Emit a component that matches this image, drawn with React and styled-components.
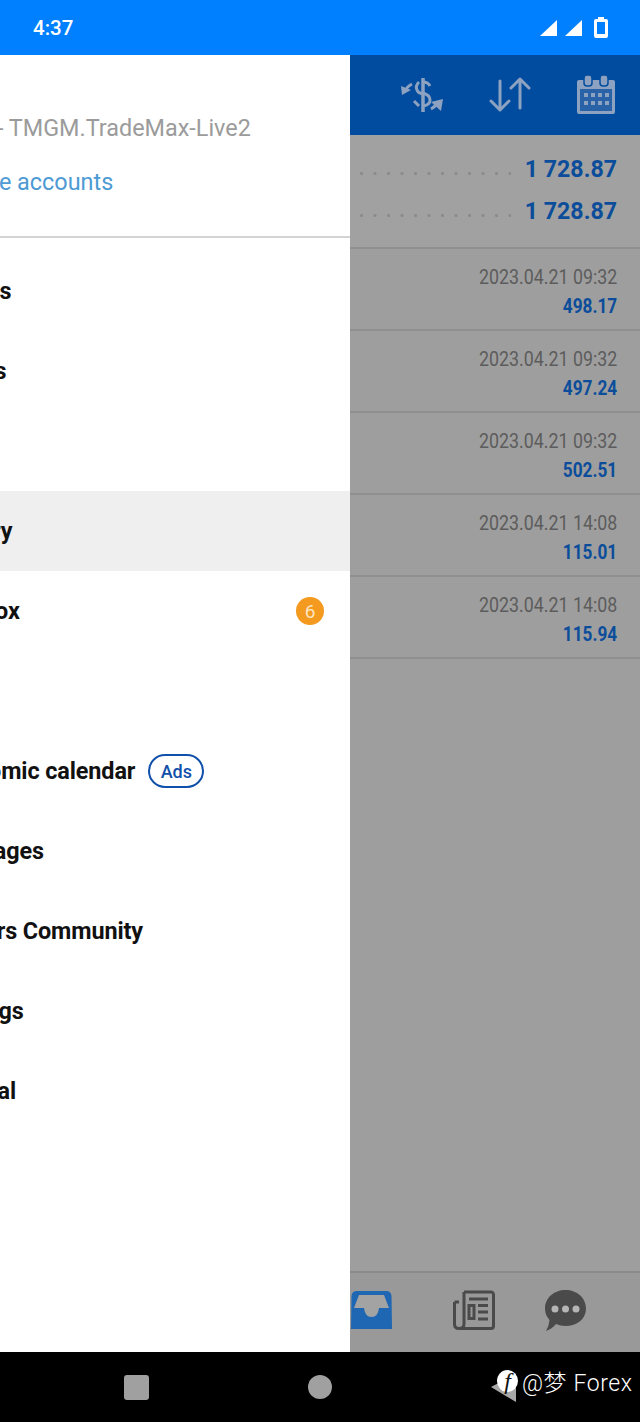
import styled, { createGlobalStyle } from 'styled-components'

const GlobalStyle = createGlobalStyle`
    html, body {
        margin: 0;
        padding: 0;
        background: #000;
    }
    body {
        font-family: Roboto, "Noto Sans CJK SC", sans-serif;
    }
`

const menuItems = [
    { label: 'Quotes' },
    { label: 'Charts' },
    { label: 'Trade' },
    { label: 'History', active: true },
    { label: 'Mailbox', count: 6 },
    { label: 'News' },
    { label: 'Economic calendar', ads: true },
    { label: 'Messages' },
    { label: 'Traders Community' },
    { label: 'Settings' },
    { label: 'Journal' },
]

const deals = [
    { time: '2023.04.21 09:32', value: '498.17' },
    { time: '2023.04.21 09:32', value: '497.24' },
    { time: '2023.04.21 09:32', value: '502.51' },
    { time: '2023.04.21 14:08', value: '115.01' },
    { time: '2023.04.21 14:08', value: '115.94' },
]

const Screen = styled.div`
    position: relative;
    width: 640px;
    height: 1422px;
    display: flex;
    flex-direction: column;
    overflow: hidden;
`

const StatusBar = styled.div`
    height: 55px;
    flex: none;
    background: #0080ff;
    display: flex;
    align-items: center;
    justify-content: space-between;
    padding: 0 32px 0 33px;
    box-sizing: border-box;
    color: #fff;
`

const Clock = styled.span`
    font-size: 20.5px;
    font-weight: 500;
`

const StatusIcons = styled.div`
    display: flex;
    align-items: center;
    gap: 8px;
`

const BatterySlot = styled.div`
    display: flex;
    margin-left: 4px;
`

const Body = styled.div`
    flex: 1;
    min-height: 0;
    display: flex;
`

const Drawer = styled.aside`
    width: 350px;
    flex: none;
    background: #fff;
    display: flex;
    flex-direction: column;
    overflow: hidden;
`

const DrawerHeader = styled.div`
    height: 183px;
    flex: none;
    box-sizing: border-box;
    border-bottom: 2px solid #d4d4d4;
    padding-top: 58px;
    display: flex;
    flex-direction: column;
    gap: 24px;
`

const ServerLine = styled.div`
    font-size: 23.4px;
    line-height: 30px;
    color: #9b9b9b;
    margin-left: -3px;
    white-space: nowrap;
`

const ManageLink = styled.div`
    font-size: 23.4px;
    line-height: 30px;
    color: #4d9ad4;
    margin-left: -73px;
    white-space: nowrap;
`

const Menu = styled.nav`
    padding-top: 13px;
    display: flex;
    flex-direction: column;
`

const MenuRow = styled.div`
    height: 80px;
    display: flex;
    align-items: center;
    padding-right: 26px;
    background: ${p => (p.$active ? '#efefef' : 'transparent')};
`

const MenuLabel = styled.span`
    margin-left: -63px;
    font-size: 23.4px;
    font-weight: 700;
    letter-spacing: -0.1px;
    color: #111;
    white-space: nowrap;
`

const CountBadge = styled.span`
    margin-left: auto;
    width: 28px;
    height: 28px;
    border-radius: 50%;
    background: #f39a1f;
    color: #fde6c0;
    font-size: 19px;
    display: flex;
    align-items: center;
    justify-content: center;
`

const AdsPill = styled.span`
    margin-left: 13px;
    width: 56px;
    height: 34px;
    box-sizing: border-box;
    border: 2px solid #1150aa;
    border-radius: 17px;
    color: #1150aa;
    font-size: 18px;
    font-weight: 500;
    display: flex;
    align-items: center;
    justify-content: center;
`

const Pane = styled.main`
    flex: 1;
    min-width: 0;
    background: #9e9e9e;
    display: flex;
    flex-direction: column;
`

const Toolbar = styled.div`
    height: 80px;
    flex: none;
    background: #024c9f;
    display: flex;
    align-items: center;
    justify-content: flex-end;
    gap: 45px;
    padding-right: 24px;
`

const Summary = styled.div`
    height: 114px;
    flex: none;
    box-sizing: border-box;
    padding: 13px 23px 0 10px;
    background: #a1a1a1;
    border-bottom: 2px solid #8f8f8f;
`

const SummaryRow = styled.div`
    height: 42px;
    display: flex;
    align-items: center;
    gap: 14px;
`

const Leader = styled.div`
    flex: 1;
    height: 3px;
    margin-top: 8px;
    background-image: radial-gradient(circle at 1.5px 1.5px, #8a8a8a 1.3px, transparent 1.6px);
    background-size: 13.5px 3px;
    background-repeat: repeat-x;
`

const SummaryValue = styled.span`
    font-size: 23.2px;
    font-weight: 700;
    color: #0b4d9b;
    white-space: nowrap;
`

const DealRow = styled.div`
    height: 82px;
    flex: none;
    box-sizing: border-box;
    border-bottom: 2px solid #8f8f8f;
    padding: 15px 23px 0 0;
    display: flex;
    flex-direction: column;
    align-items: flex-end;
    gap: 3px;
`

const DealTime = styled.span`
    font-size: 20px;
    line-height: 26px;
    color: #5c5c5c;
    white-space: nowrap;
    transform: scaleX(0.89);
    transform-origin: right center;
`

const DealValue = styled.span`
    font-size: 20px;
    line-height: 26px;
    font-weight: 700;
    color: #0b4d9b;
    white-space: nowrap;
    transform: scaleX(0.86);
    transform-origin: right center;
`

const Spacer = styled.div`
    flex: 1;
`

const TabBar = styled.div`
    height: 81px;
    flex: none;
    box-sizing: border-box;
    border-top: 2px solid #8a8a8a;
    background: #999;
    display: flex;
    align-items: center;
    padding: 0 0 5px 1px;
`

const TabSlot = styled.div`
    display: flex;
    margin-left: ${p => p.$gap}px;
`

const NavBar = styled.div`
    height: 70px;
    flex: none;
    background: #000;
    display: grid;
    grid-template-columns: repeat(3, 184px);
    justify-content: center;
    justify-items: center;
    align-items: center;
`

const NavSquare = styled.div`
    width: 25px;
    height: 25px;
    border-radius: 3px;
    background: #a0a0a0;
`

const NavCircle = styled.div`
    width: 24px;
    height: 24px;
    border-radius: 50%;
    background: #a0a0a0;
`

const BackSlot = styled.div`
    display: flex;
    margin-top: 1px;
`

const Watermark = styled.div`
    position: absolute;
    left: 497px;
    top: 1364px;
    display: flex;
    align-items: center;
    gap: 4px;
    color: #fff;
`

const FacebookBadge = styled.span`
    width: 21px;
    height: 22px;
    border-radius: 50%;
    background: #fff;
    color: #111;
    font-family: "Liberation Serif", serif;
    font-style: italic;
    font-size: 24px;
    line-height: 22px;
    display: flex;
    align-items: center;
    justify-content: center;
`

const WatermarkText = styled.span`
    font-family: Roboto, "Noto Sans CJK SC", sans-serif;
    font-size: 23px;
    font-weight: 300;
    letter-spacing: 0.6px;
    white-space: nowrap;
`

const SignalIcon = () => (
    <svg width="17" height="16" viewBox="0 0 17 16">
        <path d="M17 0V16H0Z" fill="#fff" />
    </svg>
)

const BatteryIcon = () => (
    <svg width="14" height="21" viewBox="0 0 14 21">
        <path d="M4 0h6v2h2a2 2 0 0 1 2 2v15a2 2 0 0 1-2 2H2a2 2 0 0 1-2-2V4a2 2 0 0 1 2-2h2Z" fill="#fff" />
        <rect x="3" y="5" width="8" height="12" fill="#0080ff" />
    </svg>
)

const ExchangeIcon = () => (
    <svg width="46" height="36" viewBox="0 0 46 36" fill="none" stroke="#8da2c0" strokeWidth="3">
        <path d="M25 1V35" strokeWidth="3.500" />
        <path d="M32 9Q30 5 25 5" />
        <path d="M25 16Q32 18 32 23Q32 28 25 29" />
        <path d="M21 5Q17 9 19 13Q20 16 25 17" />
        <path d="M16 24L21 29" />
        <path d="M14 7Q10 9 8 12" />
        <path d="M3 9L13 13L4 18Z" fill="#8da2c0" stroke="none" />
        <path d="M33 32Q37 30 39 26" />
        <path d="M33 25L45 22L43 34Z" fill="#8da2c0" stroke="none" />
    </svg>
)

const SortIcon = () => (
    <svg width="42" height="36" viewBox="0 0 42 36" fill="none" stroke="#8da2c0" strokeWidth="3" strokeLinecap="round" strokeLinejoin="round">
        <path d="M11 4V33M2 24L11 33L20 24" />
        <path d="M31 2V31M22 11L31 2L40 11" />
    </svg>
)

const CalendarIcon = () => (
    <svg width="40" height="40" viewBox="0 0 40 40">
        <path d="M3 5H37A2 2 0 0 1 39 7V37A2 2 0 0 1 37 39H3A2 2 0 0 1 1 37V7A2 2 0 0 1 3 5Z" fill="#8da2c0" />
        <rect x="4" y="14" width="32" height="22" fill="#2a62a8" />
        <rect x="8" y="0" width="8" height="11" rx="3" fill="#8da2c0" stroke="#024c9f" strokeWidth="1.5" />
        <rect x="24" y="0" width="8" height="11" rx="3" fill="#8da2c0" stroke="#024c9f" strokeWidth="1.5" />
        {[0, 1, 2, 3].map(i => [0, 1].map(j => (
            <rect key={`${i}${j}`} x={8 + i * 7} y={18 + j * 8} width="4" height="4" fill="#8da2c0" />
        )))}
    </svg>
)

const TrayIcon = () => (
    <svg width="41" height="38" viewBox="0 0 41 38">
        <path d="M6 0H35Q40 0 40.500 5L41 38H0L.5 5Q1 0 6 0Z" fill="#1f66b3" />
        <path d="M8 4H33L38 17H28Q27 26 20.500 26Q14 26 13 17H3Z" fill="#a3a3a3" />
    </svg>
)

const NewsIcon = () => (
    <svg width="42" height="40" viewBox="0 0 42 40" fill="none" stroke="#4a4a4a" strokeWidth="3">
        <path d="M11 2H38A2.5 2.5 0 0 1 40.5 4.5V36A2.5 2.5 0 0 1 38 38.500H6" />
        <path d="M11 2V34Q11 38.500 6 38.500Q1.500 38.500 1.500 34V12" />
        <path d="M1.500 12H6" />
        <path d="M16 9H35M25 15.500H35M25 22H35M25 29H35" />
        <rect x="16" y="15.500" width="5" height="13" />
    </svg>
)

const ChatIcon = () => (
    <svg width="41" height="41" viewBox="0 0 41 41">
        <path d="M20.500 0C32 0 41 8 41 18.500C41 29 32 36 20.500 36Q15 36 11 34Q7 39 1 41Q4 36 4.500 30Q0 25 0 18.500C0 8 9 0 20.500 0Z" fill="#4a4a4a" />
        <circle cx="10" cy="19" r="3.500" fill="#b5b5b5" />
        <circle cx="20.500" cy="19" r="3.500" fill="#b5b5b5" />
        <circle cx="31" cy="19" r="3.500" fill="#b5b5b5" />
    </svg>
)

const BackIcon = () => (
    <svg width="26" height="28" viewBox="0 0 26 28">
        <path d="M0 13L25 0V28Z" fill="#a8a8a8" />
    </svg>
)

const App = () => {
    return (
        <Screen>
            <GlobalStyle />
            <StatusBar>
                <Clock>4:37</Clock>
                <StatusIcons>
                    <SignalIcon />
                    <SignalIcon />
                    <BatterySlot><BatteryIcon /></BatterySlot>
                </StatusIcons>
            </StatusBar>
            <Body>
                <Drawer>
                    <DrawerHeader>
                        <ServerLine>- TMGM.TradeMax-Live2</ServerLine>
                        <ManageLink>Manage accounts</ManageLink>
                    </DrawerHeader>
                    <Menu>
                        {menuItems.map(item => (
                            <MenuRow key={item.label} $active={item.active}>
                                <MenuLabel>{item.label}</MenuLabel>
                                {item.ads && <AdsPill>Ads</AdsPill>}
                                {item.count && <CountBadge>{item.count}</CountBadge>}
                            </MenuRow>
                        ))}
                    </Menu>
                </Drawer>
                <Pane>
                    <Toolbar>
                        <ExchangeIcon />
                        <SortIcon />
                        <CalendarIcon />
                    </Toolbar>
                    <Summary>
                        <SummaryRow>
                            <Leader />
                            <SummaryValue>1 728.87</SummaryValue>
                        </SummaryRow>
                        <SummaryRow>
                            <Leader />
                            <SummaryValue>1 728.87</SummaryValue>
                        </SummaryRow>
                    </Summary>
                    {deals.map((deal, i) => (
                        <DealRow key={i}>
                            <DealTime>{deal.time}</DealTime>
                            <DealValue>{deal.value}</DealValue>
                        </DealRow>
                    ))}
                    <Spacer />
                    <TabBar>
                        <TabSlot $gap={0}><TrayIcon /></TabSlot>
                        <TabSlot $gap={61}><NewsIcon /></TabSlot>
                        <TabSlot $gap={50}><ChatIcon /></TabSlot>
                    </TabBar>
                </Pane>
            </Body>
            <NavBar>
                <NavSquare />
                <NavCircle />
                <BackSlot><BackIcon /></BackSlot>
            </NavBar>
            <Watermark>
                <FacebookBadge>f</FacebookBadge>
                <WatermarkText>@梦 Forex</WatermarkText>
            </Watermark>
        </Screen>
    )
}

export default App
